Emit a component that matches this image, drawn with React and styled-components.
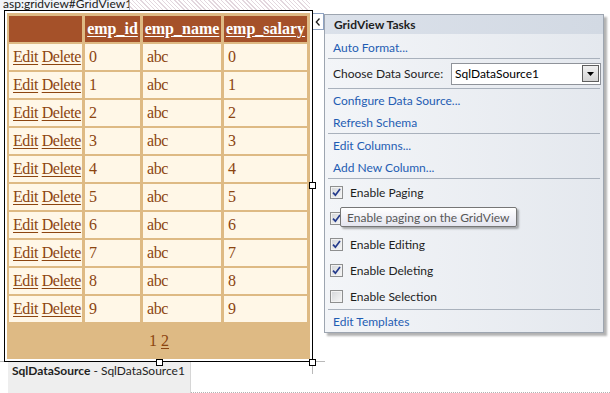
import React from "react";
import styled, { createGlobalStyle } from "styled-components";

const GlobalStyle = createGlobalStyle`
  html, body {
    margin: 0;
    padding: 0;
    background: #ffffff;
    overflow: hidden;
  }
`;

const UI = `"Lato", "Open Sans", sans-serif`;

const rows = [0, 1, 2, 3, 4, 5, 6, 7, 8, 9];

const Page = styled.div`
  width: 610px;
  height: 393px;
  display: flex;
  flex-direction: column;
  font-family: ${UI};
  font-size: 12px;
  color: #1e1e1e;
`;

const Workspace = styled.div`
  display: flex;
  align-items: flex-start;
  height: 362px;
`;

const Designer = styled.div`
  display: flex;
  flex-direction: column;
  width: 313px;
`;

const TagRow = styled.div`
  display: flex;
  height: 10px;
`;

const ControlTag = styled.div`
  width: 130px;
  height: 10px;
  overflow: hidden;
  background: #f1f4f9;
  border-right: 1px solid #9aabc9;
  padding-left: 3px;
  box-sizing: border-box;
  line-height: 7px;
  color: #202020;
  white-space: nowrap;
`;

const Hatch = styled.div`
  width: 180px;
  height: 10px;
  background: repeating-linear-gradient(
    45deg,
    #ffffff 0 2px,
    #e3d7de 2px 3px
  );
`;

const Frame = styled.div`
  position: relative;
  margin-left: 4px;
  width: 309px;
  height: 352px;
  box-sizing: border-box;
  border: 1px solid #000000;
  padding: 2px;
  background: #ffffff;
`;

const Grid = styled.div`
  display: grid;
  grid-template-columns: 73px 55px 78px 83px;
  grid-template-rows: repeat(11, 26px) 33px;
  gap: 2px 3px;
  padding: 3px 3px 2px 2px;
  background: #deba84;
  font-family: "Liberation Serif", "Times New Roman", serif;
  font-size: 16px;
`;

const Cell = styled.div`
  display: flex;
  align-items: center;
  justify-content: ${(p) => (p.$head ? "center" : "flex-start")};
  padding: ${(p) => (p.$head ? "0 2px" : "0 0 0 4px")};
  background: ${(p) => (p.$head ? "#a55129" : "#fff7e7")};
  color: ${(p) => (p.$head ? "#ffffff" : "#8c4510")};
  font-weight: ${(p) => (p.$head ? "bold" : "normal")};
  letter-spacing: ${(p) => (p.$head ? "0" : "-0.4px")};
  white-space: nowrap;
`;

const GridLink = styled.a`
  color: inherit;
  text-decoration: underline;
  text-underline-offset: 2px;
`;

const Pager = styled.div`
  grid-column: 1 / -1;
  display: flex;
  align-items: center;
  justify-content: center;
  gap: 4px;
  color: #8c4510;
  padding-left: 2px;
`;

const Handle = styled.span`
  position: absolute;
  width: 7px;
  height: 7px;
  box-sizing: border-box;
  border: 1px solid #000000;
  background: #ffffff;
  ${(p) => p.$pos}
`;

const Guide = styled.span`
  position: absolute;
  background: #b9b9b9;
  ${(p) => p.$pos}
`;

const SmartTag = styled.div`
  margin-top: 13px;
  margin-left: -1px;
  width: 12px;
  height: 17px;
  box-sizing: border-box;
  border: 1px solid #8ea2c2;
  background: #ffffff;
  display: flex;
  align-items: center;
  justify-content: center;
`;

const Panel = styled.div`
  margin-top: 14px;
  width: 280px;
  box-sizing: border-box;
  border: 1px solid #9da5b0;
  background: linear-gradient(to right, #f3f5f8, #e4e8ee);
  box-shadow: 3px 3px 2px rgba(0, 0, 0, 0.3);
  display: flex;
  flex-direction: column;
`;

const PanelHeader = styled.div`
  height: 19px;
  padding-left: 9px;
  display: flex;
  align-items: center;
  font-weight: bold;
  background: linear-gradient(to right, #dbe1ea, #d2d9e3);
  color: #1e1e1e;
`;

const Section = styled.div`
  display: flex;
  flex-direction: column;
  padding-top: ${(p) => p.$pt || 0}px;
`;

const Separator = styled.div`
  height: 1px;
  margin: 0 3px;
  background: #a9b1bc;
`;

const LinkItem = styled.a`
  height: 22px;
  display: flex;
  align-items: center;
  padding-left: 8px;
  color: #1f5db3;
  text-decoration: none;
`;

const SourceChooser = styled.div`
  height: 29px;
  display: flex;
  align-items: center;
  padding: 0 2px 0 8px;
`;

const Label = styled.span`
  flex: 1;
  color: #1e1e1e;
`;

const Select = styled.div`
  width: 150px;
  height: 22px;
  box-sizing: border-box;
  border: 1px solid #8f939a;
  background: #ffffff;
  display: flex;
  align-items: center;
  justify-content: space-between;
  padding: 0 1px 0 3px;
  color: #000000;
`;

const DropButton = styled.span`
  width: 17px;
  height: 17px;
  box-sizing: border-box;
  border: 1px solid #5e5e5e;
  background: linear-gradient(#f0f0f0, #d4d4d4);
  display: flex;
  align-items: center;
  justify-content: center;
`;

const CheckRow = styled.div`
  position: relative;
  height: 26px;
  display: flex;
  align-items: center;
  gap: 7px;
  padding-left: 5px;
  color: #1e1e1e;
`;

const Box = styled.span`
  width: 13px;
  height: 13px;
  box-sizing: border-box;
  border: 1px solid #8e8f8f;
  background: linear-gradient(135deg, #d3d5d8, #f7f7f7);
  box-shadow: inset 0 0 0 1px #f2f2f2;
  display: flex;
  align-items: center;
  justify-content: center;
`;

const Tooltip = styled.div`
  position: absolute;
  left: 15px;
  top: 2px;
  height: 20px;
  box-sizing: border-box;
  padding: 0 6px;
  display: flex;
  align-items: center;
  border: 1px solid #767676;
  border-radius: 2px;
  background: linear-gradient(#ffffff, #e4e5ef);
  box-shadow: 2px 2px 2px rgba(0, 0, 0, 0.3);
  color: #575757;
  white-space: nowrap;
`;

const SourceStrip = styled.div`
  display: flex;
  height: 31px;
`;

const SourceBar = styled.div`
  margin-left: 8px;
  width: 183px;
  box-sizing: border-box;
  background: #eeeeee;
  border-right: 1px solid #d6d6d6;
  padding: 1px 4px 0;
  line-height: 15px;
  white-space: nowrap;
  color: #1e1e1e;
`;

const Dotted = styled.div`
  flex: 1;
  height: 30px;
  border-bottom: 1px dotted #b3b3b3;
`;

const Check = ({ on }) => (
  <Box>
    {on && (
      <svg width="9" height="9" viewBox="0 0 9 9">
        <path
          d="M1 4.6 L3.4 7.2 L8 1"
          fill="none"
          stroke="#253b8c"
          strokeWidth="1.7"
        />
      </svg>
    )}
  </Box>
);

const checks = [
  { label: "Enable Paging", on: true },
  { label: "", on: true, tip: "Enable paging on the GridView" },
  { label: "Enable Editing", on: true },
  { label: "Enable Deleting", on: true },
  { label: "Enable Selection", on: false },
];

export default function App() {
  return (
    <>
      <GlobalStyle />
      <Page>
        <Workspace>
          <Designer>
            <TagRow>
              <ControlTag>asp:gridview#GridView1</ControlTag>
              <Hatch />
            </TagRow>
            <Frame>
              <Grid>
                <Cell $head />
                <Cell $head>
                  <GridLink>emp_id</GridLink>
                </Cell>
                <Cell $head>
                  <GridLink>emp_name</GridLink>
                </Cell>
                <Cell $head>
                  <GridLink>emp_salary</GridLink>
                </Cell>
                {rows.map((n) => (
                  <React.Fragment key={n}>
                    <Cell>
                      <GridLink>Edit</GridLink>&nbsp;<GridLink>Delete</GridLink>
                    </Cell>
                    <Cell>{n}</Cell>
                    <Cell>abc</Cell>
                    <Cell>{n}</Cell>
                  </React.Fragment>
                ))}
                <Pager>
                  <span>1</span>
                  <GridLink>2</GridLink>
                </Pager>
              </Grid>
              <Handle $pos="right: -4px; top: 171px;" />
              <Handle $pos="left: 151px; bottom: -5px;" />
              <Handle $pos="right: -4px; bottom: -5px;" />
              <Guide $pos="left: -5px; bottom: -1px; width: 4px; height: 1px;" />
              <Guide $pos="right: -13px; bottom: -1px; width: 9px; height: 1px;" />
              <Guide $pos="right: -1px; bottom: -13px; width: 1px; height: 8px;" />
            </Frame>
          </Designer>
          <SmartTag>
            <svg width="6" height="8" viewBox="0 0 6 8">
              <path d="M4.5 0.5 L1.3 4 L4.5 7.5" fill="none" stroke="#1e1e1e" strokeWidth="1.3" />
            </svg>
          </SmartTag>
          <Panel>
            <PanelHeader>GridView Tasks</PanelHeader>
            <Section $pt={2}>
              <LinkItem>Auto Format...</LinkItem>
            </Section>
            <Separator />
            <SourceChooser>
              <Label>Choose Data Source:</Label>
              <Select>
                <span>SqlDataSource1</span>
                <DropButton>
                  <svg width="7" height="4" viewBox="0 0 7 4">
                    <path d="M0 0 H7 L3.5 4 Z" fill="#000000" />
                  </svg>
                </DropButton>
              </Select>
            </SourceChooser>
            <Separator />
            <Section>
              <LinkItem>Configure Data Source...</LinkItem>
              <LinkItem>Refresh Schema</LinkItem>
            </Section>
            <Separator />
            <Section>
              <LinkItem>Edit Columns...</LinkItem>
              <LinkItem>Add New Column...</LinkItem>
            </Section>
            <Separator />
            <Section>
              {checks.map((c, i) => (
                <CheckRow key={i}>
                  <Check on={c.on} />
                  <span>{c.label}</span>
                  {c.tip && <Tooltip>{c.tip}</Tooltip>}
                </CheckRow>
              ))}
            </Section>
            <Separator />
            <Section>
              <LinkItem>Edit Templates</LinkItem>
            </Section>
          </Panel>
        </Workspace>
        <SourceStrip>
          <SourceBar>
            <b>SqlDataSource</b> - SqlDataSource1
          </SourceBar>
          <Dotted />
        </SourceStrip>
      </Page>
    </>
  );
}
